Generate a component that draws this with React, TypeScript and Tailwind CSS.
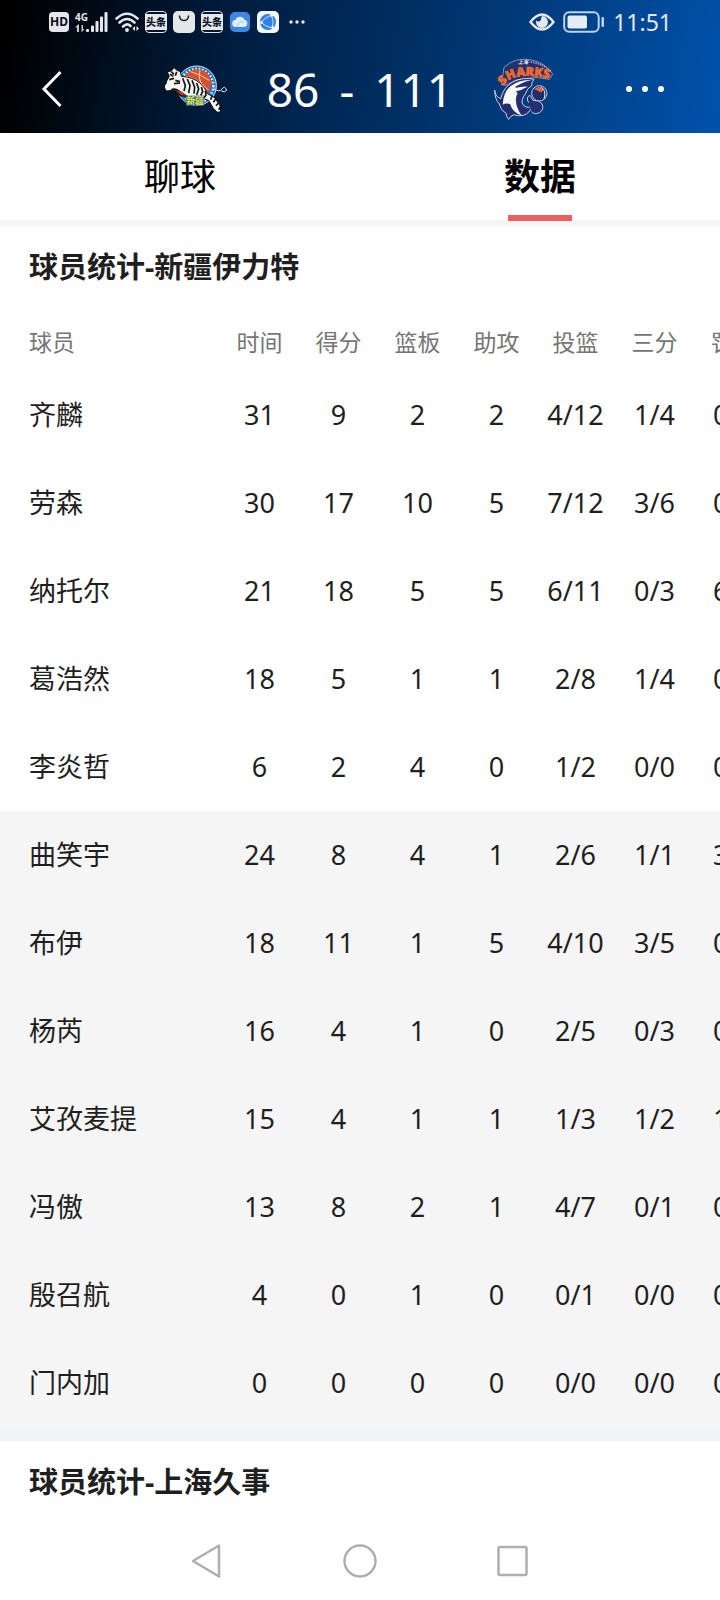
import React, { useState } from "react";

type Player = {
    name: string;
    stats: string[];
};

const COLUMNS = ["时间", "得分", "篮板", "助攻", "投篮", "三分", "罚球"];

const STARTERS: Player[] = [
    { name: "齐麟", stats: ["31", "9", "2", "2", "4/12", "1/4", "0/0"] },
    { name: "劳森", stats: ["30", "17", "10", "5", "7/12", "3/6", "0/0"] },
    { name: "纳托尔", stats: ["21", "18", "5", "5", "6/11", "0/3", "6/6"] },
    { name: "葛浩然", stats: ["18", "5", "1", "1", "2/8", "1/4", "0/0"] },
    { name: "李炎哲", stats: ["6", "2", "4", "0", "1/2", "0/0", "0/0"] },
];

const BENCH: Player[] = [
    { name: "曲笑宇", stats: ["24", "8", "4", "1", "2/6", "1/1", "3/4"] },
    { name: "布伊", stats: ["18", "11", "1", "5", "4/10", "3/5", "0/0"] },
    { name: "杨芮", stats: ["16", "4", "1", "0", "2/5", "0/3", "0/0"] },
    { name: "艾孜麦提", stats: ["15", "4", "1", "1", "1/3", "1/2", "1/2"] },
    { name: "冯傲", stats: ["13", "8", "2", "1", "4/7", "0/1", "0/0"] },
    { name: "殷召航", stats: ["4", "0", "1", "0", "0/1", "0/0", "0/0"] },
    { name: "门内加", stats: ["0", "0", "0", "0", "0/0", "0/0", "0/0"] },
];

function ToutiaoIcon() {
    return (
        <div className="flex h-[22px] w-[22px] items-center justify-center rounded border border-gray-200 py-px">
            <span className="flex h-4 w-[22px] shrink-0 items-center justify-center bg-gray-200 text-[10px] leading-none font-black whitespace-nowrap text-[#061226]">
                头条
            </span>
        </div>
    );
}

function StatusBar() {
    return (
        <div className="flex h-11 items-center justify-between pr-12 pl-[49px] text-gray-200">
            <div className="flex items-center gap-1.5">
                <span className="flex h-5 w-5 items-center justify-center rounded bg-gray-200 text-[12px] leading-none font-bold text-[#030c1c]">
                    HD
                </span>
                <svg width="34" height="22" viewBox="0 0 34 22" fill="currentColor" className="overflow-visible">
                    <text x="0" y="10" fontSize="10" fontWeight="700">4G</text>
                    <path d="M3 13.5 0 16.5h2V21h2v-7.5zM7 21l2.5-3H8v-4H6.5v7z" opacity=".85" />
                    <rect x="11" y="18" width="3" height="3" rx="1" />
                    <rect x="16" y="14.5" width="3" height="6.5" rx="1" />
                    <rect x="20.5" y="10" width="3" height="11" rx="1" />
                    <rect x="25" y="5.5" width="3" height="15.5" rx="1" />
                    <rect x="29.5" y="1" width="3" height="20" rx="1" />
                </svg>
                <svg width="24" height="22" viewBox="0 0 24 22" fill="none" stroke="currentColor" strokeWidth="2.6" strokeLinecap="round">
                    <path d="M1.5 7.5Q12-2 22.5 7.5" />
                    <path d="M4.5 11.5Q12 4.5 19.5 11.5" />
                    <path d="M8 15.5Q12 11.5 15.5 15" />
                    <circle cx="12" cy="19" r="1.2" fill="currentColor" strokeWidth="1.5" />
                    <path d="M20 15v5l-2.5-2.5zM21.5 15v5l2.5-2.5z" fill="currentColor" stroke="none" />
                </svg>
                <ToutiaoIcon />
                <svg width="22" height="22" viewBox="0 0 22 22">
                    <rect width="22" height="22" rx="5" fill="#e5e7eb" />
                    <path d="M6.5 5a4.5 4.5 0 0 0 9 0" fill="none" stroke="#222" strokeWidth="1.6" strokeLinecap="round" />
                </svg>
                <ToutiaoIcon />
                <svg width="22" height="22" viewBox="0 0 22 22">
                    <rect x="1" y="1" width="20" height="20" rx="5" fill="#3c87e8" />
                    <path d="M7 16a3.5 3.5 0 0 1-.5-7 4.8 4.8 0 0 1 9-.2A3.7 3.7 0 0 1 15.5 16z" fill="#e3edfa" />
                    <path d="M9 15.5a3.5 3.5 0 0 1 6-3.5" fill="none" stroke="#a9caf3" />
                </svg>
                <svg width="22" height="22" viewBox="0 0 22 22">
                    <rect width="22" height="22" rx="5" fill="#f3f7fc" />
                    <circle cx="11" cy="11" r="8" fill="#3380e6" />
                    <path d="M14.5 4Q7 7 4 11.5 9 16 15.5 17M14.5 4Q17 10 15.5 17" fill="none" stroke="#cfe2fb" />
                    <circle cx="14.5" cy="4.5" r="1.3" fill="#fff" />
                    <circle cx="4.5" cy="11.5" r="1.3" fill="#fff" />
                    <circle cx="15.5" cy="16.5" r="1.3" fill="#fff" />
                </svg>
                <svg width="24" height="22" viewBox="0 0 24 22" fill="currentColor">
                    <circle cx="6" cy="11" r="1.7" />
                    <circle cx="12" cy="11" r="1.7" />
                    <circle cx="18" cy="11" r="1.7" />
                </svg>
            </div>
            <div className="flex items-center gap-2">
                <svg width="26" height="22" viewBox="0 0 26 22" fill="none" stroke="currentColor" strokeWidth="2.4">
                    <path d="M1.5 11Q13-4 24.5 11 13 26 1.5 11z" />
                    <path d="M13 5a6 6 0 1 1-5.8 4.4 2.8 2.8 0 0 0 5-1.3c.2-1.1-.1-2.2.8-3.1z" fill="currentColor" stroke="none" />
                </svg>
                <svg width="42" height="22" viewBox="0 0 42 22">
                    <rect x="1.2" y="1.2" width="34.5" height="19.6" rx="5" fill="none" stroke="#b9d4f5" strokeWidth="2" />
                    <rect x="4.5" y="4.5" width="19.5" height="13" rx="2" fill="#e5edf8" />
                    <rect x="38.5" y="6" width="2.5" height="10" rx="1" fill="#b9d4f5" />
                </svg>
                <span className="text-[23px] leading-none">11:51</span>
            </div>
        </div>
    );
}

function TigerLogo() {
    return (
        <svg width="62" height="50" viewBox="45 45 186 150" role="img" aria-label="新疆">
            <circle cx="140" cy="110" r="59" fill="#1c72c4" stroke="#dfe9f3" strokeWidth="3" />
            <circle cx="140" cy="110" r="50" fill="none" stroke="#dceaf6" strokeWidth="8" strokeDasharray="5 5" />
            <circle cx="142" cy="103" r="42" fill="#d5532c" />
            <path d="M106 82q32 2 70 42M150 62q-8 30 14 60M122 68q30 8 56 26" fill="none" stroke="#f7cdb4" strokeWidth="3" />
            {/* 身体 */}
            <path
                d="M50 96l8-14-6-13 12-3 8-10 9 8 10 4 3 14q34 2 56 20 16 14 22 32l22 12 16 24 2 18-10 2-12-12-14-24q-20-6-34-12-18 8-34 2l-38-20-22 2-6-14 6-8z"
                fill="#f4f4ef"
                stroke="#141414"
                strokeWidth="3"
            />
            <path
                d="M98 88l8 22-4 16M112 90l8 20-4 22M126 94l8 20-2 20M140 102l6 18-6 18M154 114l4 14-6 12M166 126l2 12-6 8M186 140l-4 12M200 146l-10 14M210 158l-12 12M214 170l-8 12M60 76l10 6M64 68l8 8M80 68l-4 12M58 92l14-4M76 94l14 4M72 104l18-2"
                fill="none"
                stroke="#151515"
                strokeWidth="5"
            />
            <path d="M62 120q14-6 26 4l26 18-18 2-18-10z" fill="#151515" />
            <path d="M76 124l18 4 14 12-14-2z" fill="#c93823" />
            <path d="M190 118q18 14 26 2t14 4q-6 8-16 2" fill="none" stroke="#e8eef4" strokeWidth="3" />
            <rect x="108" y="140" width="54" height="30" fill="#1c72c4" />
            <text x="109" y="166" fontSize="26" fontWeight="900" fill="#e9dc2c">新疆</text>
        </svg>
    );
}

function SharkLogo() {
    return (
        <svg width="62" height="62" viewBox="39 24 186 186" role="img" aria-label="SHARKS" className="overflow-visible">
            <defs>
                <path id="sharks-arc" d="M70 108Q98 60 218 88" />
            </defs>
            <path d="M64 104l8-52q34-32 84-22 38 8 62 42l-10 16-40-6-60 8-30 16z" fill="#22306f" stroke="#b9c4dd" strokeWidth="2" />
            <text x="114" y="42" fontSize="15" fontWeight="700" fontStyle="italic" fill="#e8edf5">上海</text>
            <path d="M152 36q36 4 60 28" fill="none" stroke="#9fb0d2" strokeWidth="5" strokeDasharray="4 3" />
            <text fontSize="37" fontWeight="900" fill="#f0692e" stroke="#f0692e" strokeWidth="2">
                <textPath href="#sharks-arc">SHARKS</textPath>
            </text>
            {/* 鲨鱼 */}
            <path
                d="M44 120q2 20 18 26 8-34 36-50 32-16 64-8-10 12-6 18-16 10-20 26-14 18-8 30 8 14 26 8-4 20-24 26-16 4-28-2-12 4-16 14-8-8-8-18-16-8-20-28-14-14-14-42z"
                fill="#232e70"
                stroke="#cbd3e6"
                strokeWidth="3"
            />
            <path d="M92 108q26-20 62-18-34 8-48 24 20-6 38-4-28 10-34 26-8 26 14 60-26-8-34-34-12-4-22 2 2-38 24-56z" fill="#f6f7fb" />
            <path d="M104 112q14-10 32-10l-10 8z" fill="#232e70" />
            <path d="M108 124l26-6-20 14z" fill="#232e70" />
            <circle cx="178" cy="130" r="23" fill="#202c6b" stroke="#cbd3e6" strokeWidth="3" />
            <path d="M162 118q18-16 32 2-8 0-10 8-12-8-22-10z" fill="#e5683e" />
            <path d="M184 112q16 10 8 34" fill="none" stroke="#e7ebf4" strokeWidth="3" />
            <path d="M146 158q-10-16 4-22l10 16q18-2 26 10 8 16-8 26-16 8-24-4" fill="#22306f" stroke="#cbd3e6" strokeWidth="3" />
        </svg>
    );
}

function ScoreHeader() {
    return (
        <div className="grid h-[89px] grid-cols-[1fr_auto_1fr] items-center px-10 text-white">
            <button type="button" aria-label="返回" className="justify-self-start">
                <svg width="24" height="40" viewBox="0 0 24 40" fill="none" stroke="currentColor" strokeWidth="3">
                    <path d="M20.5 3 4 20l16.5 17" />
                </svg>
            </button>
            <div className="flex w-[390px] items-center justify-between">
                <TigerLogo />
                <div className="flex items-center gap-5 text-[46px] leading-none">
                    <span>86</span>
                    <span>-</span>
                    <span>111</span>
                </div>
                <SharkLogo />
            </div>
            <button type="button" aria-label="更多" className="justify-self-end pr-3.5">
                <svg width="42" height="12" viewBox="0 0 42 12" fill="currentColor">
                    <circle cx="5" cy="6" r="3" />
                    <circle cx="21" cy="6" r="3" />
                    <circle cx="37" cy="6" r="3" />
                </svg>
            </button>
        </div>
    );
}

function PlayerRows({ players }: { players: Player[] }) {
    return (
        <>
            {players.map((player) => (
                <tr key={player.name} className="h-[88px]">
                    <th scope="row" className="pb-0.5 pl-[29px] text-left font-normal">
                        {player.name}
                    </th>
                    {player.stats.map((value, i) => (
                        <td key={COLUMNS[i]} className="pb-0.5 text-center">
                            {value}
                        </td>
                    ))}
                </tr>
            ))}
        </>
    );
}

function App() {
    const [tab, setTab] = useState("数据");

    return (
        <div className="min-h-screen bg-white font-['Noto_Sans','Noto_Sans_CJK_SC',sans-serif] text-[#1f1f1f]">
            <header className="bg-[linear-gradient(100deg,#000_2%,#001d3f_32%,#003570_64%,#0052ac_100%)]">
                <StatusBar />
                <ScoreHeader />
            </header>

            <nav className="grid h-[93px] grid-cols-2 border-b-[6px] border-[#f5f5f5] text-black">
                {["聊球", "数据"].map((name) => (
                    <button
                        key={name}
                        type="button"
                        onClick={() => setTab(name)}
                        className={`relative text-[36px] leading-none ${tab === name ? "font-bold" : "font-normal"}`}
                    >
                        {name}
                        {tab === name && (
                            <span className="absolute -bottom-px left-1/2 h-1.5 w-16 -translate-x-1/2 bg-[#ee5f60]" />
                        )}
                    </button>
                ))}
            </nav>

            <main>
                <section>
                    <h2 className="flex h-20 items-center pl-[29px] text-[29px] leading-none font-bold">
                        球员统计-新疆伊力特
                    </h2>
                    <div className="overflow-x-auto [scrollbar-width:none]">
                        <table className="w-[773px] table-fixed text-[27px] leading-none">
                            <thead>
                                <tr className="h-[65px] text-[23px] text-[#757575]">
                                    <th scope="col" className="w-[220px] pt-2 pl-[29px] text-left font-normal">
                                        球员
                                    </th>
                                    {COLUMNS.map((column) => (
                                        <th key={column} scope="col" className="w-[79px] pt-2 font-normal">
                                            {column}
                                        </th>
                                    ))}
                                </tr>
                            </thead>
                            <tbody>
                                <PlayerRows players={STARTERS} />
                            </tbody>
                            <tbody className="bg-[#f5f5f5]">
                                <PlayerRows players={BENCH} />
                            </tbody>
                        </table>
                    </div>
                    <div className="h-3.5 bg-[#f2f3f5]" />
                </section>
                <section>
                    <h2 className="flex h-20 items-center pl-[29px] text-[29px] leading-none font-bold">
                        球员统计-上海久事
                    </h2>
                </section>
            </main>

            {/* 系统导航栏 */}
            <footer className="flex h-20 items-center justify-center gap-[117px] text-[#afafaf]">
                <button type="button" aria-label="后退">
                    <svg width="36" height="36" viewBox="0 0 36 36" fill="none" stroke="currentColor" strokeWidth="2.5" strokeLinejoin="round">
                        <path d="M30 2.5v31L4 18z" />
                    </svg>
                </button>
                <button type="button" aria-label="主页">
                    <svg width="36" height="36" viewBox="0 0 36 36" fill="none" stroke="currentColor" strokeWidth="2.5">
                        <circle cx="18" cy="18" r="15.5" />
                    </svg>
                </button>
                <button type="button" aria-label="最近任务">
                    <svg width="36" height="36" viewBox="0 0 36 36" fill="none" stroke="currentColor" strokeWidth="2.5">
                        <rect x="3.5" y="4" width="28" height="28" rx="1.5" />
                    </svg>
                </button>
            </footer>
        </div>
    );
}

export default App;
